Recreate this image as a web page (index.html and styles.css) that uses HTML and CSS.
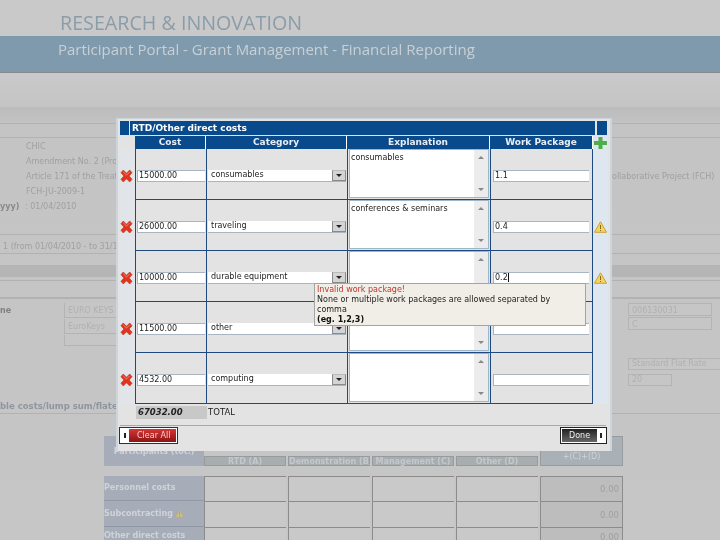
FILE: index.html
```html
<!DOCTYPE html>
<html lang="en">
<head>
<meta charset="utf-8">
<title>Financial Reporting</title>
<link rel="stylesheet" href="styles.css">
</head>
<body>
<svg class="defs" width="0" height="0" aria-hidden="true">
  <symbol id="x" viewBox="0 0 13 13"><path d="M.5 3 3-.0l3.500 3.500L10-.0l2.500 3L9.300 6.500l3.200 3.500L10 13 6.500 9.500 3 13 .5 10l3.200-3.500z" fill="#e2341c" stroke="#b83a22" stroke-width=".7"/><path d="M3 2l3.500 3.500L10 2" fill="none" stroke="#f4a090" stroke-width=".8"/></symbol>
  <symbol id="warn" viewBox="0 0 13 12"><path d="M6.500 .8 12.600 11.300H.4z" fill="#f5d45e" stroke="#c9a23a"/><path d="M6.500 4v4M6.500 9v1" stroke="#8a6a1c"/></symbol>
  <symbol id="plus" viewBox="0 0 13 12"><path d="M4.500 0h4v4H13v4H8.500v4h-4V8H0V4h4.500z" fill="#4fae4a"/></symbol>
</svg>
<div class="page">
  <div class="backdrop">
    <div class="brand">RESEARCH &amp; INNOVATION</div>
    <div class="bar">Participant Portal - Grant Management - Financial Reporting</div>
    <div class="gap"></div>
    <div class="main">
      <div class="line-row h17"></div>
      <div class="line-row h14"></div>
      <div class="info">
        <div class="info-row"><span>CHIC</span></div>
        <div class="info-row"><span>Amendment No. 2 (Proposal)</span></div>
        <div class="info-row split"><span>Article 171 of the Treaty</span><span class="far">ollaborative Project (FCH)</span></div>
        <div class="info-row"><span>FCH-JU-2009-1</span></div>
        <div class="info-row date"><b>yyy)</b><span>: 01/04/2010</span></div>
      </div>
      <div class="line-row period">1 (from 01/04/2010 - to 31/12/2010)</div>
      <div class="band"></div>
      <div class="line-row h4"></div>
      <div class="line-row h17"></div>
      <div class="legal">
        <b class="legal-label">ne</b>
        <div class="fields">
          <div class="ghost wide">EURO KEYS</div>
          <div class="ghost wide">EuroKeys</div>
          <div class="ghost wide short"></div>
        </div>
        <div class="fields right">
          <div class="ghost pic">006130031</div>
          <div class="ghost pic">C</div>
          <div class="ghost rate">Standard Flat Rate</div>
          <div class="ghost small">20</div>
        </div>
      </div>
      <div class="costs-title"><b>ble costs/lump sum/flate rate</b></div>
      <div class="costs">
        <div class="c-head">Participants (tot.)</div>
        <div class="c-col">RTD (A)</div>
        <div class="c-col">Demonstration (B)</div>
        <div class="c-col">Management (C)</div>
        <div class="c-col">Other (D)</div>
        <div class="c-total">(A)+(B)<br>+(C)+(D)</div>

        <div class="c-label">Personnel costs</div>
        <div class="c-cell"></div><div class="c-cell"></div><div class="c-cell"></div><div class="c-cell"></div>
        <div class="c-sum">0.00</div>

        <div class="c-label">Subcontracting <svg class="tiny"><use href="#warn"/></svg></div>
        <div class="c-cell"></div><div class="c-cell"></div><div class="c-cell"></div><div class="c-cell"></div>
        <div class="c-sum">0.00</div>

        <div class="c-label">Other direct costs</div>
        <div class="c-cell"></div><div class="c-cell"></div><div class="c-cell"></div><div class="c-cell"></div>
        <div class="c-sum">0.00</div>
      </div>
    </div>
  </div>

  <div class="modal">
    <div class="title-row">
      <div class="t-block"></div>
      <div class="t-main">RTD/Other direct costs</div>
      <div class="t-block end"></div>
    </div>
    <div class="grid">
      <div class="gut"></div>
      <div class="th">Cost</div>
      <div class="th">Category</div>
      <div class="th">Explanation</div>
      <div class="th">Work Package</div>
      <div class="gut tinted add"><svg class="ic"><use href="#plus"/></svg></div>

      <div class="gut del"><svg class="ic"><use href="#x"/></svg></div>
      <div class="td"><div class="in">15000.00</div></div>
      <div class="td"><div class="sel"><span>consumables</span><i class="drop"></i></div></div>
      <div class="td ta"><div class="area"><span>consumables</span><div class="scroll"><i class="up"></i><i class="dn"></i></div></div></div>
      <div class="td last"><div class="in">1.1</div></div>
      <div class="gut tinted"></div>

      <div class="gut del"><svg class="ic"><use href="#x"/></svg></div>
      <div class="td"><div class="in">26000.00</div></div>
      <div class="td"><div class="sel"><span>traveling</span><i class="drop"></i></div></div>
      <div class="td ta"><div class="area"><span>conferences &amp; seminars</span><div class="scroll"><i class="up"></i><i class="dn"></i></div></div></div>
      <div class="td last"><div class="in">0.4</div></div>
      <div class="gut tinted warn"><svg class="ic"><use href="#warn"/></svg></div>

      <div class="gut del"><svg class="ic"><use href="#x"/></svg></div>
      <div class="td"><div class="in">10000.00</div></div>
      <div class="td"><div class="sel"><span>durable equipment</span><i class="drop"></i></div></div>
      <div class="td ta"><div class="area"><span></span><div class="scroll"><i class="up"></i><i class="dn"></i></div></div></div>
      <div class="td last"><div class="in"><span class="caret">0.2</span></div></div>
      <div class="gut tinted warn"><svg class="ic"><use href="#warn"/></svg></div>

      <div class="gut del"><svg class="ic"><use href="#x"/></svg></div>
      <div class="td"><div class="in">11500.00</div></div>
      <div class="td"><div class="sel"><span>other</span><i class="drop"></i></div></div>
      <div class="td ta"><div class="area"><span></span><div class="scroll"><i class="up"></i><i class="dn"></i></div></div></div>
      <div class="td last"><div class="in"></div></div>
      <div class="gut tinted"></div>

      <div class="gut del"><svg class="ic"><use href="#x"/></svg></div>
      <div class="td"><div class="in">4532.00</div></div>
      <div class="td"><div class="sel"><span>computing</span><i class="drop"></i></div></div>
      <div class="td ta"><div class="area"><span></span><div class="scroll"><i class="up"></i><i class="dn"></i></div></div></div>
      <div class="td last"><div class="in"></div></div>
      <div class="gut tinted"></div>
    </div>
    <div class="total"><b class="sum">67032.00</b><span>TOTAL</span></div>
    <div class="actions">
      <div class="btn clear"><i class="knob"></i><span>Clear All</span></div>
      <div class="btn done"><span>Done</span><i class="knob"></i></div>
    </div>
    <div class="tip">
      <div class="tip-err">Invalid work package!</div>
      <div>None or multiple work packages are allowed separated by<br>comma</div>
      <b class="tip-eg">(eg. 1,2,3)</b>
    </div>
  </div>
</div>
</body>
</html>
```
FILE: styles.css
```css
* { box-sizing: border-box; }
html, body { margin: 0; padding: 0; }
body { font-family: "DejaVu Sans", Verdana, sans-serif; font-size: 8px; color: #222; background: #c8c8c8; }
.defs { display: block; height: 0; }
.page { position: relative; width: 720px; height: 540px; overflow: hidden; background: #c9c9c9; }
.backdrop { filter: blur(.35px); }

.brand { height: 36px; padding: 12px 0 0 60px; font: 19.700px/22px "Open Sans", "Noto Sans", sans-serif; color: #8b9ca9; white-space: nowrap; }
.bar { height: 37px; padding: 3px 0 0 58px; font: 15px/20px "Open Sans", "Noto Sans", sans-serif; color: #c8d0d6; background: #7f9aad; border-bottom: 1px solid #868a8e; white-space: nowrap; }
.gap { height: 34px; background: linear-gradient(#cacaca, #c4c4c4); }

.main { height: 433px; background: linear-gradient(#bcbcbc 0, #c4c4c4 20px, #c6c6c6 100%); color: #a0a0a0; white-space: nowrap; overflow: hidden; }
.line-row { border-bottom: 1px solid #b2b2b2; }
.h17 { height: 17px; }
.h14 { height: 14px; }
.h4 { height: 4px; }
.info { height: 97px; padding-top: 1px; border-bottom: 1px solid #b2b2b2; }
.info-row { height: 15px; padding-left: 26px; line-height: 15px; display: flex; }
.info-row.split { justify-content: space-between; }
.far { width: 108px; overflow: hidden; }
.info-row.date { padding-left: 0; }
.date b { width: 25px; font-weight: 700; color: #8a8a8a; }
.period { height: 19px; padding: 5px 0 0 3px; line-height: 13px; }
.band { height: 12px; margin-top: 11px; background: #b5b5b5; }
.legal { height: 101px; display: flex; padding-top: 4px; border-top: 1px solid #b2b2b2; }
.legal-label { width: 64px; padding-top: 3px; color: #808080; }
.fields { display: flex; flex-direction: column; gap: 1px; }
.fields.right { margin-left: auto; width: 92px; }
.ghost { height: 15px; padding: 2px 3px; line-height: 11px; border: 1px solid #b4b4b4; background: #c6c6c6; color: #b0b0b0; }
.wide { width: 60px; border-width: 0 0 1px 1px; }
.short { height: 11px; }
.pic { width: 84px; height: 13px; padding: 1px 3px; }
.rate { width: 92px; height: 12px; margin-top: 27px; line-height: 8px; padding: 1px 3px; border-right: 0; }
.small { width: 44px; height: 12px; margin-top: 3px; line-height: 8px; padding: 1px 3px; }
.costs-title { height: 15px; padding-top: 2px; color: #8e96a0; border-bottom: 1px solid #b2b2b2; font-size: 8.500px; }
.costs { display: grid; grid-template-columns: 100px 84px 84px 84px 84px 83px; grid-template-rows: 40px 25px 26px 18px; margin: 22px 0 0 104px; color: #cfd3d8; }
.c-head { height: 30px; background: #a6adb9; text-align: center; padding-top: 11px; font-weight: 700; }
.c-col { margin: 20px 2px 10px 0; background: #a8adb0; border: 1px solid #979b9e; text-align: center; line-height: 9px; font-weight: 700; color: #c4c8cc; }
.c-total { height: 30px; background: #a9b0b6; border: 1px solid #979b9e; text-align: center; padding-top: 5px; line-height: 10px; }
.c-label { background: #a6adb9; display: flex; align-items: center; font-weight: 700; line-height: 8px; border-bottom: 1px solid #9098a6; gap: 2px; }
.c-cell { border-top: 1px solid #8c8c8c; border-left: 1px solid #8c8c8c; background: #c9c9c9; margin-right: 2px; }
.c-sum { display: flex; align-items: center; justify-content: flex-end; border: 1px solid #8c8c8c; border-bottom: 0; background: #bdbdbd; padding-right: 3px; color: #a0a0a0; font-size: 8.500px; line-height: 8px; }
.tiny { width: 9px; height: 9px; opacity: .5; }

.modal { position: absolute; left: 116px; top: 118px; width: 496px; height: 333px; padding: 2px 2px 0; background: #e3e3e3; border: 2px solid #ccd4dc; border-width: 1px 2px 0; filter: blur(.3px); }
.title-row { display: flex; gap: 1px; height: 14px; }
.t-block { width: 9px; background: #084a8c; }
.t-block.end { width: 10px; margin-left: 1px; }
.t-main { width: 465px; background: #084a8c; color: #fff; padding-left: 2px; font-size: 9px; font-weight: 700; line-height: 14px; }
.grid { display: grid; grid-template-columns: 15px 71px 141px 143px 103px 15px; grid-template-rows: 13px repeat(5, 51px); margin-top: 1px; }
.th { background: #084a8c; color: #e8eef4; font-weight: 700; font-size: 9px; text-align: center; line-height: 13px; border-right: 1px solid #fff; }
.gut { display: flex; align-items: center; justify-content: center; }
.gut.del { justify-content: flex-start; padding-top: 3px; background: #e1e4e8; }
.gut.tinted { background: #dee6f0; justify-content: flex-start; padding-left: 1px; }
.gut.warn { padding-top: 3px; }
.ic { width: 13px; height: 12px; }
.td { display: flex; align-items: center; padding: 3px 1px 0; background: #e3e3e3; border-left: 1px solid #1f4a80; border-bottom: 1px solid #1f4a80; }
.td.last { border-right: 1px solid #1f4a80; padding: 3px 3px 0 2px; }
.td.ta { padding: 0 1px; align-items: stretch; }
.in { width: 100%; height: 12px; padding: 0 0 0 1px; background: #fff; border: 1px solid #a9b5c0; border-width: 1px 0 1px 1px; line-height: 10px; font-size: 8px; }
.sel { width: 100%; height: 12px; display: flex; align-items: center; justify-content: space-between; padding-left: 3px; background: #fff; border-bottom: 1px solid #a9b5c0; line-height: 10px; }
.drop { position: relative; width: 14px; height: 11px; background: #d4d4d4; border: 1px solid #8a8a8a; border-top-color: #bbb; }
.drop::after { content: ""; position: absolute; left: 3px; top: 3px; border: 3px solid transparent; border-top-color: #222; border-bottom: 0; }
.area { width: 100%; display: flex; justify-content: space-between; background: #fff; margin: 0 0 1px; border: 1px solid #9eb6c8; }
.area > span { padding: 3px 1px; }
.scroll { position: relative; width: 14px; background: #ececec; }
.up, .dn { position: absolute; left: 4px; border: 3px solid transparent; }
.up { top: 6px; border-bottom-color: #888; border-top: 0; }
.dn { bottom: 6px; border-top-color: #888; border-bottom: 0; }
.caret { border-right: 1px solid #111; }

.total { display: flex; height: 14px; margin: 1px 0 0 16px; gap: 1px; align-items: center; }
.sum { width: 71px; height: 13px; padding-left: 2px; background: #c8c8c8; font-style: italic; line-height: 13px; font-size: 8.500px; }
.total span { font-size: 8.500px; }
.actions { display: flex; justify-content: space-between; margin: 6px 2px 0 0; padding-top: 2px; border-top: 1px solid #a8a8a8; }
.btn { display: flex; align-items: center; height: 15px; border: 1px solid #fff; outline: 1px solid #222; }
.clear { width: 57px; gap: 8px; background: linear-gradient(#d83434, #8c1414); outline-color: #7a1010; color: #f6d0d0; }
.done { width: 45px; justify-content: space-between; padding-left: 7px; background: linear-gradient(#222, #666); color: #eee; }
.knob { position: relative; width: 8px; height: 13px; background: #fff; }
.knob::after { content: ""; position: absolute; left: 3px; top: 4px; width: 2px; height: 5px; background: #222; }
.tip { position: absolute; left: 196px; top: 164px; width: 272px; height: 43px; padding: 1px 2px; background: #f0eee6; border: 1px solid #a4a4a4; line-height: 10px; font-size: 8px; }
.tip-err { color: #c8322a; }
.tip-eg { color: #111; }
```
